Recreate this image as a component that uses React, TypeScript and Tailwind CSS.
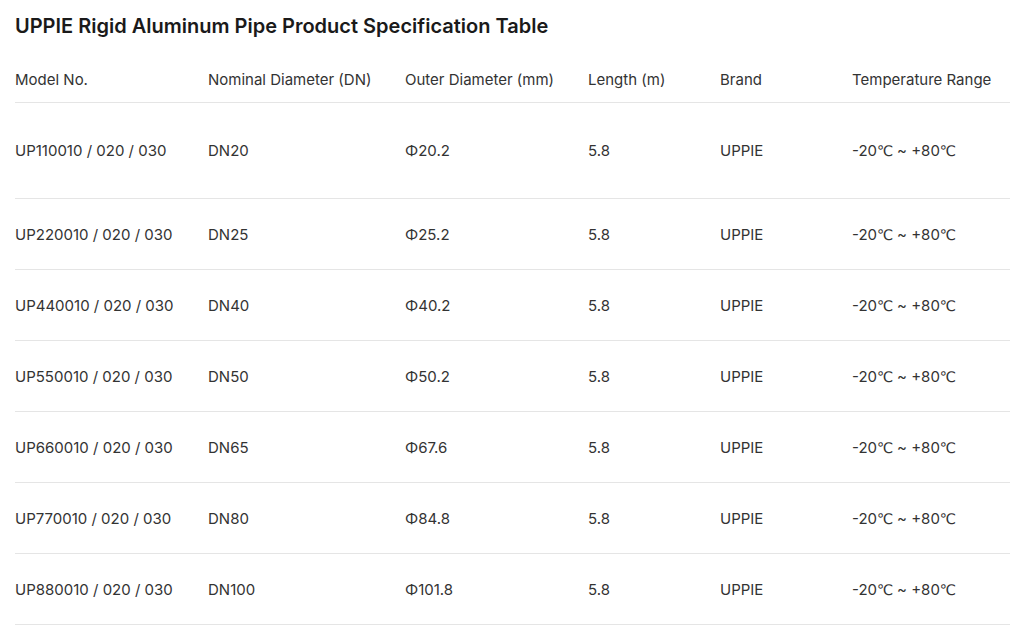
const rows = [
  { model: "UP110010 / 020 / 030", dn: "DN20", od: "Φ20.2" },
  { model: "UP220010 / 020 / 030", dn: "DN25", od: "Φ25.2" },
  { model: "UP440010 / 020 / 030", dn: "DN40", od: "Φ40.2" },
  { model: "UP550010 / 020 / 030", dn: "DN50", od: "Φ50.2" },
  { model: "UP660010 / 020 / 030", dn: "DN65", od: "Φ67.6" },
  { model: "UP770010 / 020 / 030", dn: "DN80", od: "Φ84.8" },
  { model: "UP880010 / 020 / 030", dn: "DN100", od: "Φ101.8" },
];

function Celsius() {
  return <span className="font-['DejaVu_Sans',sans-serif] text-[14.5px] tracking-[-0.5px]">℃</span>;
}

export default function App() {
  return (
    <div className="min-h-screen bg-white font-['Inter',sans-serif] text-[#333]">
      <div className="pl-[15px] pt-[12px]">
        <h2 className="text-[20px] leading-[28px] font-semibold text-[#1a1a1a]">
          UPPIE Rigid Aluminum Pipe Product Specification Table
        </h2>
        <table className="mt-[18px] w-[995px] table-fixed border-collapse text-[15px] leading-[22px]">
          <colgroup>
            <col className="w-[193px]" />
            <col className="w-[197px]" />
            <col className="w-[183px]" />
            <col className="w-[132px]" />
            <col className="w-[132px]" />
            <col />
          </colgroup>
          <thead>
            <tr className="h-[44px] border-b border-[#e5e5e5] text-left">
              <th className="font-normal">Model No.</th>
              <th className="font-normal">Nominal Diameter (DN)</th>
              <th className="font-normal">Outer Diameter (mm)</th>
              <th className="font-normal">Length (m)</th>
              <th className="font-normal">Brand</th>
              <th className="font-normal">Temperature Range</th>
            </tr>
          </thead>
          <tbody>
            {rows.map((r, i) => (
              <tr
                key={r.model}
                className={
                  "border-b border-[#e5e5e5] " + (i === 0 ? "h-[96px]" : "h-[71px]")
                }
              >
                <td className="pt-[2px]">{r.model}</td>
                <td className="pt-[2px]">{r.dn}</td>
                <td className="pt-[2px]">{r.od}</td>
                <td className="pt-[2px]">5.8</td>
                <td className="pt-[2px]">UPPIE</td>
                <td className="pt-[2px]">
                  -20<Celsius /> ~ +80<Celsius />
                </td>
              </tr>
            ))}
          </tbody>
        </table>
      </div>
    </div>
  );
}
